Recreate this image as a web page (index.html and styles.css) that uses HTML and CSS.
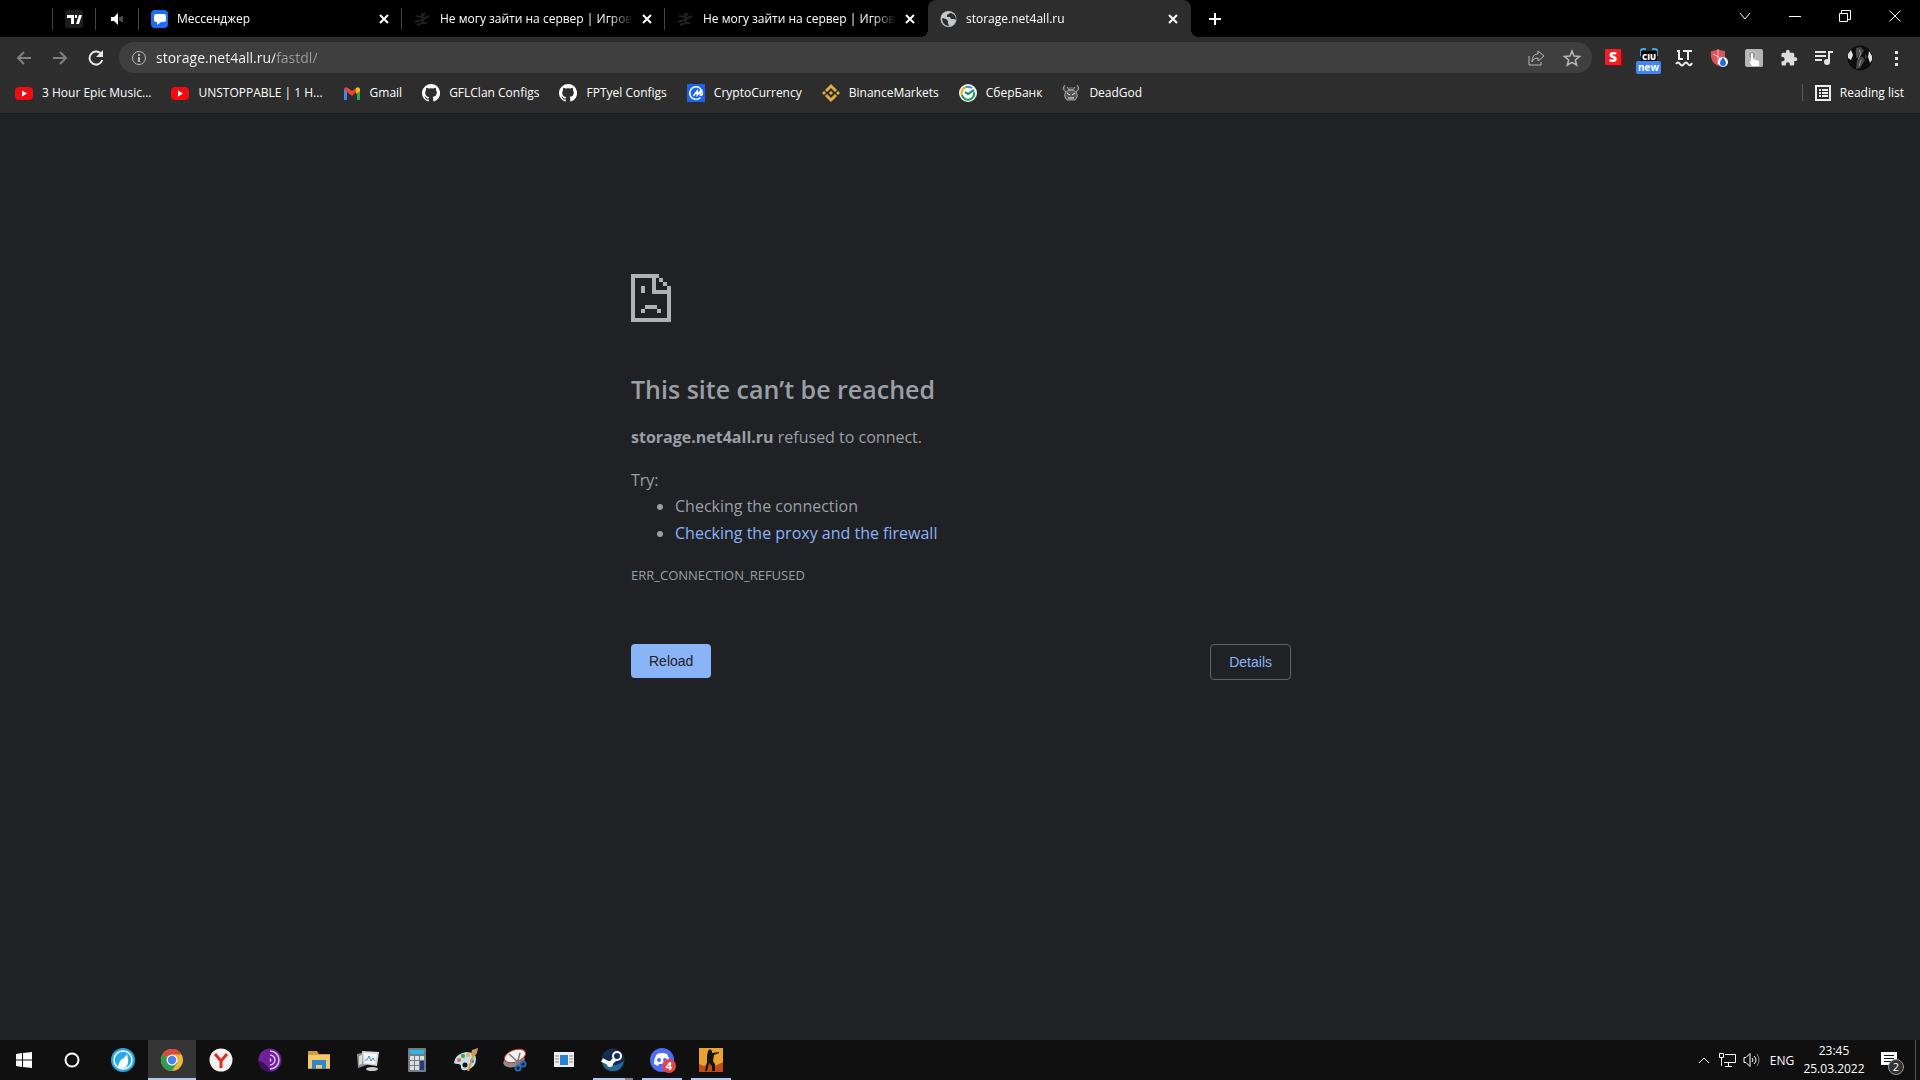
FILE: index.html
```
<!DOCTYPE html>
<html lang="en">
<head>
    <meta charset="UTF-8">
    <meta name="viewport" content="width=device-width, initial-scale=1.0">
    <title>storage.net4all.ru</title>
    <link rel="stylesheet" href="styles.css">
</head>
<body>
    <header class="browser">
        <div class="tabStrip">
            <div class="tab pinned blank"></div>
            <div class="tab pinned">
                <svg width="18" height="18" viewBox="0 0 18 18"><rect width="18" height="18" rx="2" fill="#1c1c1c"/><path d="M2 5h7v9H6V8H2zM10 5h2v3h-2zM14 5h3l-3 9h-3z" fill="#fff"/></svg>
            </div>
            <div class="tab pinned">
                <svg width="14" height="14" viewBox="0 0 14 14"><path d="M1 5h3l4-4v12L4 9H1z" fill="#fff"/><path d="M10 5v4M12 4v6" stroke="#999" fill="none"/></svg>
            </div>
            <div class="tab">
                <svg class="favicon" width="17" height="18" viewBox="0 0 17 18"><rect width="17" height="18" rx="4" fill="#1a6df5"/><path d="M5 4h8q2 0 2 2v4q0 2-2 2h-3l-4 3v-3H5q-2 0-2-2V6q0-2 2-2z" fill="#fff"/></svg>
                <span class="tabTitle">Мессенджер</span>
                <button class="close" aria-label="Close tab"><svg width="10" height="10" viewBox="0 0 10 10"><path d="M1 1l8 8M9 1L1 9"/></svg></button>
            </div>
            <div class="tab">
                <svg class="favicon" width="17" height="18" viewBox="0 0 17 18"><path d="M2 6l6 1 3-4M1 12l6-2 8-4M3 15l5-2 5 0M8 3l1 10" stroke="#202020" stroke-width="2" fill="none"/></svg>
                <span class="tabTitle">Не могу зайти на сервер | Игров</span>
                <button class="close" aria-label="Close tab"><svg width="10" height="10" viewBox="0 0 10 10"><path d="M1 1l8 8M9 1L1 9"/></svg></button>
            </div>
            <div class="tab last">
                <svg class="favicon" width="17" height="18" viewBox="0 0 17 18"><path d="M2 6l6 1 3-4M1 12l6-2 8-4M3 15l5-2 5 0M8 3l1 10" stroke="#202020" stroke-width="2" fill="none"/></svg>
                <span class="tabTitle">Не могу зайти на сервер | Игров</span>
                <button class="close" aria-label="Close tab"><svg width="10" height="10" viewBox="0 0 10 10"><path d="M1 1l8 8M9 1L1 9"/></svg></button>
            </div>
            <div class="tab active">
                <svg class="favicon" width="17" height="18" viewBox="0 0 17 18"><circle cx="8.5" cy="9" r="8" fill="#c4c7ca"/><path d="M2 8l4 1 2 2v2l1 3c-4 0-7-3-7-8zM10 3l-3 2v2h3l1 2h3l2 1c0-4-2-6-5-7z" fill="#2d2d2d"/></svg>
                <span class="tabTitle">storage.net4all.ru</span>
                <button class="close" aria-label="Close tab"><svg width="10" height="10" viewBox="0 0 10 10"><path d="M1 1l8 8M9 1L1 9"/></svg></button>
            </div>
            <button class="newTab" aria-label="New tab"><svg width="14" height="14" viewBox="0 0 14 14"><path d="M7 1v12M1 7h12" stroke="#fff" stroke-width="2"/></svg></button>
            <div class="windowButtons">
                <button aria-label="Search tabs"><svg width="12" height="12" viewBox="0 0 12 12"><path d="M1 3l5 6 5-6"/></svg></button>
                <button aria-label="Minimize"><svg width="12" height="12" viewBox="0 0 12 12"><path d="M0 6.500h12"/></svg></button>
                <button aria-label="Restore"><svg width="12" height="12" viewBox="0 0 12 12"><path d="M.5 3.500h8v8h-8zM2.500 3V.5h9v9H9"/></svg></button>
                <button aria-label="Close"><svg width="12" height="12" viewBox="0 0 12 12"><path d="M.5.5l11 11M11.500.5l-11 11"/></svg></button>
            </div>
        </div>

        <div class="toolbar">
            <button class="navBtn dim" aria-label="Back"><svg width="16" height="16" viewBox="0 0 16 16"><path d="M15 8H2M8 2L2 8l6 6"/></svg></button>
            <button class="navBtn dim" aria-label="Forward"><svg width="16" height="16" viewBox="0 0 16 16"><path d="M1 8h13M8 2l6 6-6 6"/></svg></button>
            <button class="navBtn" aria-label="Reload"><svg width="16" height="16" viewBox="0 0 16 16"><path d="M13.500 4.500A6.500 6.500 0 1 0 14.300 10" stroke-width="2"/><path d="M15 0v7H8z" fill="#e8e8e8" stroke="none"/></svg></button>
            <div class="omnibox">
                <svg width="16" height="16" viewBox="0 0 16 16"><circle cx="8" cy="8" r="6.500" stroke="#bbb" fill="none"/><path d="M8 4v2M8 7v5" stroke="#bbb" stroke-width="2"/></svg>
                <input class="url" type="text" aria-label="Address" value="storage.net4all.ru/fastdl/">
                <button class="boxBtn" aria-label="Share"><svg width="18" height="18" viewBox="0 0 18 18"><path d="M2 7v9h12v-3M11 2l6 5-6 5V9c-3 0-5 1-6 4 0-5 2-8 6-8z"/></svg></button>
                <button class="boxBtn" aria-label="Bookmark"><svg width="18" height="18" viewBox="0 0 18 18"><path d="M9 2l2 5 5.500.4-4.200 3.500 1.400 5.300L9 13.400l-4.700 2.800 1.400-5.300L1.500 7.400 7 7z" stroke-width="1.500"/></svg></button>
            </div>
            <div class="extensions">
                <button aria-label="Extension S"><svg width="20" height="20" viewBox="0 0 20 20"><path d="M16 2l3 2v14H4l-3-3z" fill="#8e0b10"/><rect x="1" y="1" width="16" height="16" rx="1" fill="#ef1d24"/><text x="9" y="14" text-anchor="middle" class="glyph">S</text></svg></button>
                <button class="badged" aria-label="Extension CIU"><svg width="20" height="20" viewBox="0 0 20 20"><path d="M2 8V3q0-2 2-2h3M13 1h3q2 0 2 2v5" stroke="#35a7e8" stroke-width="2" fill="none"/><rect x="2" y="3" width="16" height="10" fill="#050505"/><text x="10" y="12" text-anchor="middle" class="glyph tiny">CIU</text></svg><span class="badge">new</span></button>
                <button aria-label="LanguageTool"><svg width="18" height="18" viewBox="0 0 18 18"><path d="M2 2h2v8h4M8 2h9M13 2v9M1 15q2-3 4 0t4 0 4 0 4-1" stroke="#eee" stroke-width="2" fill="none"/></svg></button>
                <button aria-label="Shield"><svg width="18" height="18" viewBox="0 0 18 18"><path d="M8 0q3 2 7 2v6q-1 6-7 9Q2 14 1 8V2q4 0 7-2z" fill="#d9545b"/><path d="M8 1v14M3 5l9 5" stroke="#f2b9bb"/><circle cx="13" cy="13" r="5" fill="#fff"/><path d="M13 8q3 4 3 6a3 3 0 0 1-6 0q0-2 3-6z" fill="#246de0"/></svg></button>
                <button aria-label="Click"><svg width="18" height="18" viewBox="0 0 18 18"><rect width="18" height="18" rx="2" fill="#b4b4b4"/><circle cx="7" cy="6" r="4" fill="#999" stroke="#ccc"/><path d="M6 5q1-2 2 0v5l6 2v5H7l-3-5 2 1z" fill="#fff"/></svg></button>
                <button aria-label="Extensions"><svg width="18" height="18" viewBox="0 0 24 24"><path d="M20.500 11H19V7a2 2 0 0 0-2-2h-4V3.500a2.500 2.500 0 0 0-5 0V5H4a2 2 0 0 0-2 2v3.800h1.500a2.700 2.700 0 0 1 0 5.400H2V20a2 2 0 0 0 2 2h3.800v-1.500a2.700 2.700 0 0 1 5.400 0V22H17a2 2 0 0 0 2-2v-4h1.500a2.500 2.500 0 0 0 0-5z" fill="#ddd"/></svg></button>
                <button aria-label="Media"><svg width="20" height="18" viewBox="0 0 20 18"><path d="M1 3h11M1 7h11M1 11h7M15 13V3h4" stroke="#e4e4e4" stroke-width="2" fill="none"/><circle cx="13" cy="13" r="2" fill="#e4e4e4" stroke="#e4e4e4" stroke-width="2"/></svg></button>
                <button class="profile" aria-label="Profile"><svg width="26" height="26" viewBox="0 0 26 26"><circle cx="13" cy="13" r="12.500" fill="#0d0d0d"/><path d="M1 9l3-4 2 5-2 5-3-2zM22 6l3 5v4l-2 3-2-6z" fill="#ddd"/><path d="M9 3l5-1 3 4-4 5-4 2zM10 15l5-4 3 4-5 8-4 1zM18 9l2 3-2 2z" fill="#484848"/><path d="M12 5l2 4-3 5M14 15l-2 6" stroke="#999" fill="none"/></svg></button>
                <button aria-label="Menu"><svg width="6" height="18" viewBox="0 0 6 18"><path d="M1 2h3v3H1zM1 8h3v3H1zM1 14h3v3H1z" fill="#e4e4e4"/></svg></button>
            </div>
        </div>

        <nav class="bookmarks">
            <a href="#"><svg width="18" height="18" viewBox="0 0 18 18"><rect y="3" width="18" height="13" rx="4" fill="#f00d12"/><path d="M7 6.500v6l5-3z" fill="#fff"/></svg>3 Hour Epic Music...</a>
            <a href="#"><svg width="18" height="18" viewBox="0 0 18 18"><rect y="3" width="18" height="13" rx="4" fill="#f00d12"/><path d="M7 6.500v6l5-3z" fill="#fff"/></svg>UNSTOPPABLE | 1 H...</a>
            <a href="#"><svg width="18" height="18" viewBox="0 0 18 18"><path d="M1 5l3 2v9H1z" fill="#4285f4"/><path d="M14 7l3-2v11h-3z" fill="#34a853"/><path d="M1 5q1-3 4-1l4 3 4-3v4l-4 4-5-4z" fill="#ea4335"/><path d="M13 4q3-2 4 1v2l-4 3z" fill="#fbbc04"/></svg>Gmail</a>
            <a href="#"><svg width="18" height="18" viewBox="0 0 16 16"><path d="M8 0a8 8 0 0 0-2.500 15.600c.4.1.5-.2.5-.4v-1.500c-2.200.5-2.700-.9-2.700-.9-.4-.9-.9-1.200-.9-1.200-.7-.5.1-.5.1-.5.8.1 1.200.8 1.200.8.7 1.200 1.900.9 2.300.7.1-.5.3-.9.5-1.100-1.800-.2-3.600-.9-3.600-4 0-.9.300-1.600.8-2.100-.1-.2-.4-1 .1-2.100 0 0 .7-.2 2.200.8a7.600 7.600 0 0 1 4 0c1.500-1 2.200-.8 2.200-.8.4 1.100.2 1.900.1 2.100.5.6.8 1.300.8 2.100 0 3.100-1.900 3.700-3.700 3.900.3.300.6.800.6 1.500v2.300c0 .2.100.5.600.4A8 8 0 0 0 8 0z" fill="#fff"/></svg>GFLClan Configs</a>
            <a href="#"><svg width="18" height="18" viewBox="0 0 16 16"><path d="M8 0a8 8 0 0 0-2.500 15.600c.4.1.5-.2.5-.4v-1.500c-2.200.5-2.700-.9-2.700-.9-.4-.9-.9-1.200-.9-1.200-.7-.5.1-.5.1-.5.8.1 1.200.8 1.200.8.7 1.200 1.900.9 2.300.7.1-.5.3-.9.5-1.100-1.800-.2-3.600-.9-3.600-4 0-.9.300-1.600.8-2.100-.1-.2-.4-1 .1-2.100 0 0 .7-.2 2.200.8a7.600 7.600 0 0 1 4 0c1.500-1 2.200-.8 2.200-.8.4 1.100.2 1.900.1 2.100.5.6.8 1.300.8 2.100 0 3.100-1.900 3.700-3.700 3.900.3.300.6.800.6 1.500v2.300c0 .2.100.5.600.4A8 8 0 0 0 8 0z" fill="#fff"/></svg>FPTyel Configs</a>
            <a href="#"><svg width="18" height="18" viewBox="0 0 18 18"><rect width="18" height="18" rx="1" fill="#1b62f0"/><path d="M13.500 13.500A6.300 6.300 0 1 1 15.300 9q0 3-2 2V7l-3 4V7l-4 5" stroke="#fff" stroke-width="1.500" fill="none"/></svg>CryptoCurrency</a>
            <a href="#"><svg width="18" height="18" viewBox="0 0 18 18"><path d="M9 0l6 6-2 2-4-4-4 4-2-2zM9 18l6-6-2-2-4 4-4-4-2 2zM2 7l2 2-2 2-2-2zM16 7l2 2-2 2-2-2zM9 7l2 2-2 2-2-2z" fill="#e3ad3c"/></svg>BinanceMarkets</a>
            <a href="#"><svg width="18" height="18" viewBox="0 0 18 18"><circle cx="9" cy="9" r="9" fill="#f5f8f5"/><path d="M3 11A6 6 0 0 1 7 3" stroke="#e5ad2a" stroke-width="2" fill="none"/><path d="M7 3q3-1 6 1" stroke="#2e8fd8" stroke-width="2" fill="none"/><path d="M3 11a6 6 0 0 0 12-3" stroke="#1d9b69" stroke-width="2" fill="none"/><path d="M6 8l3 2 6-4" stroke="#1b7f6b" stroke-width="2" fill="none"/></svg>СберБанк</a>
            <a href="#"><svg width="18" height="18" viewBox="0 0 18 18"><path d="M3 1q-4 4 1 7M15 1q4 4-1 7M5 3l2 3h4l2-3M4 8q-3 4 1 8h8q4-4 1-8l-3-2H7z" fill="#555" stroke="#aaa"/><path d="M5 9l3 2M13 9l-3 2M6 14h6" stroke="#eee"/></svg>DeadGod</a>
            <button class="readingList"><svg width="16" height="16" viewBox="0 0 16 16"><rect x="1" y="1" width="14" height="14" fill="none" stroke="#eee" stroke-width="2"/><path d="M4 5h2M7 5h6M4 8h2M7 8h6M4 11h2M7 11h6" stroke="#eee" stroke-width="2"/></svg>Reading list</button>
        </nav>
    </header>

    <main class="page">
        <div class="errorBox">
            <svg class="sadFile" width="40" height="48" viewBox="0 0 40 48" shape-rendering="crispEdges"><path d="M0 0h28v4h4v4h4v4h4v36H0zM4 4v40h32V20H21V4zM25 4v12h11v-4h-4V8h-4V4z" fill="#b0b3b6" fill-rule="evenodd"/><path d="M10 12h4v7h-4zM14 31h12v4H14zM10 35h4v4h-4zM26 35h4v4h-4z" fill="#b0b3b6"/></svg>
            <h1>This site can’t be reached</h1>
            <p><strong>storage.net4all.ru</strong> refused to connect.</p>
            <p class="try">Try:</p>
            <ul>
                <li>Checking the connection</li>
                <li><a href="#">Checking the proxy and the firewall</a></li>
            </ul>
            <p class="errorCode">ERR_CONNECTION_REFUSED</p>
            <div class="buttons">
                <button class="reload">Reload</button>
                <button class="details">Details</button>
            </div>
        </div>
    </main>

    <footer class="taskbar">
        <button class="task start" aria-label="Start"><svg width="16" height="16" viewBox="0 0 16 16"><path d="M0 2l6-1v6.500H0zM7 1l9-1v7.500H7zM0 8.500h6V15l-6-1zM7 8.500h9V16l-9-1z" fill="#fff"/></svg></button>
        <button class="task start" aria-label="Search"><svg width="16" height="16" viewBox="0 0 16 16"><circle cx="8" cy="8" r="6.500" stroke="#fff" stroke-width="2" fill="none"/></svg></button>
        <div class="apps">
            <button class="task" aria-label="LibreWolf"><svg width="24" height="24" viewBox="0 0 24 24"><circle cx="12" cy="12" r="12" fill="#27a8ea"/><circle cx="12" cy="12" r="9" fill="none" stroke="#fff" stroke-width="1.500"/><path d="M7 19q1-7 6-9l3-4 1 5q1 4-2 8-4 2-8 0z" fill="#fff"/></svg></button>
            <button class="task current" aria-label="Chrome"><svg width="24" height="24" viewBox="0 0 24 24"><circle cx="12" cy="12" r="11" fill="#e8b93c"/><path d="M12 12L2.500 6.500A11 11 0 0 1 21.500 6.500H12z" fill="#e2473b"/><path d="M12 12L2.500 6.500A11 11 0 0 0 12 23l5-8z" fill="#2f9c55"/><circle cx="12" cy="12" r="5.500" fill="#f3f3f3"/><circle cx="12" cy="12" r="4.200" fill="#4a84ee"/></svg></button>
            <button class="task" aria-label="Yandex"><svg width="24" height="24" viewBox="0 0 24 24"><circle cx="12" cy="12" r="11.500" fill="#f2f2f2"/><path d="M6 6l6 7 6-7M12 12v8" stroke="#e22b25" stroke-width="3" fill="none"/></svg></button>
            <button class="task" aria-label="Tor"><svg width="24" height="24" viewBox="0 0 24 24"><circle cx="12" cy="12" r="11.500" fill="#6f1f9b"/><path d="M0 13q6-1 12 10Q2 24 0 13z" fill="#3c0f5d"/><path d="M12 3a9 9 0 0 1 0 18M12 7a5 5 0 0 1 0 10M12 10.500a2 2 0 0 1 0 3" stroke="#d9c6ea" stroke-width="1.500" fill="none"/></svg></button>
            <button class="task" aria-label="Explorer"><svg width="24" height="24" viewBox="0 0 24 24"><path d="M1 3h9l2 3h11v15H1z" fill="#d39b3a"/><path d="M1 7h22v13H1z" fill="#f3c96c"/><path d="M5 12h14v9h-4v-4H9v4H5z" fill="#2c87d2"/></svg></button>
            <button class="task" aria-label="Monitor"><svg width="24" height="24" viewBox="0 0 24 24"><path d="M1 6l10-2v13l-9 3z" fill="#8d8f92"/><path d="M3 8l3-1v9l-3 1z" fill="#ddd"/><path d="M6 3l17 1-2 14-14-2z" fill="#d6d9dc"/><path d="M8 5l13 1-2 10-10-1z" fill="#f5f9ff"/><path d="M9 12h2l2-4 2 5 2-3 2 3" stroke="#4388d0" fill="none"/><ellipse cx="16" cy="21" rx="6" ry="2" fill="#c9cbcd"/></svg></button>
            <button class="task" aria-label="Calculator"><svg width="24" height="24" viewBox="0 0 24 24"><rect x="3" width="18" height="24" rx="1" fill="#777c80"/><path d="M5 2h14v4H5z" fill="#2bb7ed"/><path d="M5 8h4v4H5zM10 8h4v4h-4zM15 8h4v4h-4zM5 13h4v4H5zM10 13h4v4h-4zM5 18h4v4H5zM10 18h4v4h-4z" fill="#dcdfe1"/><path d="M15 13h4v9h-4z" fill="#1f3c84"/></svg></button>
            <button class="task" aria-label="Paint"><svg width="24" height="24" viewBox="0 0 24 24"><path d="M0 15Q1 6 12 4q10 0 10 7 0 9-10 11-5 1-5-3 0-3-3-3t-4-1z" fill="#c5dcee"/><circle cx="5" cy="12" r="2" fill="#de6b35"/><circle cx="9" cy="8" r="2" fill="#499b4a"/><circle cx="14" cy="7" r="2" fill="#e4b52e"/><circle cx="11" cy="17" r="2.500" fill="#111"/><circle cx="18" cy="13" r="2" fill="#296cc5"/><path d="M13 23l5-15 2 1-5 14z" fill="#e19a2c"/><path d="M17 7l1-5 6-2-1 5-3 4z" fill="#c99a63"/></svg></button>
            <button class="task" aria-label="Snipping tool"><svg width="24" height="24" viewBox="0 0 24 24"><ellipse cx="11" cy="13" rx="11" ry="6" transform="rotate(-15 11 13)" fill="#8d8d8f"/><ellipse cx="12" cy="8" rx="11" ry="6" transform="rotate(-20 12 8)" fill="#f0f0f0" stroke="#c93831"/><path d="M6 6l11 10M17 5l-3 11" stroke="#777" stroke-width="1.500"/><circle cx="15" cy="20" r="2.500" fill="none" stroke="#246cae" stroke-width="2"/><circle cx="20" cy="16" r="2.500" fill="none" stroke="#246cae" stroke-width="2"/></svg></button>
            <button class="task" aria-label="Window"><svg width="24" height="24" viewBox="0 0 24 24"><path d="M2 4h20v15H2z" fill="#eee"/><path d="M8 7h8v10H8z" fill="#2382d5"/><path d="M3 8h4M3 11h4M3 14h4M17 8h4M17 11h4M17 14h4" stroke="#888"/></svg></button>
            <button class="task open stacked" aria-label="Steam"><svg width="24" height="24" viewBox="0 0 24 24"><circle cx="12" cy="12" r="11.500" fill="#142d55"/><path d="M1 15q11 6 22-2-2 10-11 10-8 0-11-8z" fill="#246b9b"/><path d="M1 12l8 4 7-7" stroke="#fff" stroke-width="4" fill="none"/><circle cx="16" cy="8" r="4" fill="#142d55" stroke="#fff" stroke-width="2"/><circle cx="9" cy="16" r="3" fill="#fff"/></svg></button>
            <button class="task open" aria-label="Discord"><svg width="26" height="26" viewBox="0 0 26 26"><circle cx="13" cy="13" r="12" fill="#4e6df0"/><path d="M8 7q5-2 10 0 3 5 3 10l-4 2-1-2h-6l-1 2-4-2q0-6 3-10z" fill="#fff"/><circle cx="10" cy="13" r="2" fill="#4e6df0"/><circle cx="16" cy="13" r="2" fill="#4e6df0"/></svg><span class="count">4</span></button>
            <button class="task open" aria-label="Counter-Strike"><svg width="24" height="24" viewBox="0 0 24 24"><path d="M0 0h24v24H0z" fill="#e9a52e"/><path d="M0 16l5 2 5-3 6 3 8-4v10H0z" fill="#bd4c1e"/><path d="M9 3l2-2 2 2v2l7-1v1l-5 2-1 6 2 3 0 7h-3l0-5-3-3-2 8H6l2-9V8z" fill="#171410"/></svg></button>
        </div>
        <div class="tray">
            <button aria-label="Hidden icons"><svg width="14" height="14" viewBox="0 0 14 14"><path d="M2 10l5-5 5 5"/></svg></button>
            <button aria-label="Network"><svg width="18" height="16" viewBox="0 0 18 16"><path d="M6 2.500h10.500v8H5M.5 1.500h4v4h-4zM2.500 6v8M9.500 11v3M6 14.500h7"/></svg></button>
            <button aria-label="Volume"><svg width="18" height="16" viewBox="0 0 18 16"><path d="M1 5.500h2l4-4v13l-4-4H1zM9 6q2 2 0 4M11 4q4 4 0 8"/><path d="M14 2q4 6 0 12" opacity=".5"/></svg></button>
            <button class="lang">ENG</button>
            <div class="clock"><span>23:45</span><span>25.03.2022</span></div>
            <button class="notes" aria-label="Notifications"><svg width="18" height="18" viewBox="0 0 18 18"><path d="M1 1h16v13h-4v4l-4-4H1z" fill="#fff" stroke="none"/><path d="M4 4.500h10M4 7.500h10M4 10.500h7" stroke="#111"/></svg><span class="noteCount">2</span></button>
        </div>
    </footer>
</body>
</html>
```
FILE: styles.css
```
* {
    box-sizing: border-box;
}

body {
    margin: 0;
    min-height: 100vh;
    display: flex;
    flex-direction: column;
    background-color: #202124;
    color: #fff;
    font-family: "Segoe UI", "Open Sans", "Noto Sans", sans-serif;
    font-size: 12px;
}

button {
    display: flex;
    align-items: center;
    justify-content: center;
    padding: 0;
    border: none;
    background: none;
    color: inherit;
    font: inherit;
    cursor: pointer;
}

svg {
    display: block;
    flex-shrink: 0;
}

.browser {
    background-color: #2d2d2d;
    border-bottom: 1px solid #1c1c1d;
}

/* tabs */
.tabStrip {
    display: flex;
    height: 37px;
    background-color: #000;
}

.tab {
    position: relative;
    display: flex;
    align-items: center;
    flex: 0 1 263px;
    min-width: 0;
    padding: 0 13px 0 12px;
    gap: 9px;
}

.tab::after {
    content: "";
    position: absolute;
    right: 0;
    top: 8px;
    width: 1px;
    height: 22px;
    background-color: #444;
}

.tab.pinned {
    flex: 0 0 43px;
    justify-content: center;
    padding: 0 2px 0 0;
}

.tab.blank {
    flex-basis: 53px;
}

.tab.last::after {
    display: none;
}

.tab.active {
    background-color: #2d2d2d;
    border-radius: 8px 8px 0 0;
}

.tab.active::before,
.tab.active::after {
    content: "";
    position: absolute;
    top: auto;
    bottom: 0;
    width: 8px;
    height: 8px;
}

.tab.active::before {
    left: -8px;
    background: radial-gradient(circle at 0 0, #000 8px, #2d2d2d 8px);
}

.tab.active::after {
    right: -8px;
    background: radial-gradient(circle at 100% 0, #000 8px, #2d2d2d 8px);
}

.tabTitle {
    flex: 1;
    overflow: hidden;
    white-space: nowrap;
    mask-image: linear-gradient(to left, transparent, #000 24px);
}

.close svg {
    stroke: #fff;
    stroke-width: 2;
}

.newTab {
    width: 48px;
}

.windowButtons {
    display: flex;
    height: 32px;
    margin-left: auto;
}

.windowButtons button {
    width: 50px;
}

.windowButtons svg {
    fill: none;
    stroke: #fff;
}

/* address bar */
.toolbar {
    display: flex;
    align-items: center;
    padding: 5px 6px 4px;
}

.navBtn {
    width: 36px;
    height: 28px;
}

.navBtn svg {
    fill: none;
    stroke: #e8e8e8;
    stroke-width: 2;
}

.navBtn.dim svg {
    stroke: #808080;
}

.omnibox {
    flex: 1;
    display: flex;
    align-items: center;
    height: 31px;
    margin-left: 5px;
    padding: 0 11px 0 12px;
    border-radius: 16px;
    background-color: #3f3f3f;
}

.url {
    flex: 1;
    min-width: 0;
    height: 28px;
    margin-left: 9px;
    padding: 0;
    border: none;
    outline: none;
    font: inherit;
    font-size: 14px;
    color: transparent;
    caret-color: #fff;
    /* host is white, the path after it is grey */
    background: linear-gradient(to right, #fff 119px, #9e9e9e 119px);
    background-clip: text;
}

.boxBtn {
    width: 18px;
    margin-left: 18px;
}

.boxBtn svg {
    fill: none;
    stroke: #b8b8b8;
}

.extensions {
    display: flex;
    align-items: center;
    margin-left: 4px;
}

.extensions button {
    width: 35px;
    height: 28px;
}

.extensions .profile {
    width: 38px;
}

.glyph {
    fill: #fff;
    font-size: 14px;
    font-weight: 800;
}

.glyph.tiny {
    font-size: 8px;
}

.badged {
    position: relative;
}

.badge {
    position: absolute;
    left: 5px;
    bottom: -2px;
    width: 25px;
    border-radius: 2px;
    background-color: #4285f4;
    font-size: 10px;
    font-weight: 700;
    line-height: 13px;
}

/* bookmarks */
.bookmarks {
    display: flex;
    align-items: center;
    gap: 20px;
    height: 36px;
    padding: 0 16px 5px 15px;
}

.bookmarks a {
    display: flex;
    align-items: center;
    gap: 9px;
    color: #fff;
    text-decoration: none;
    white-space: nowrap;
}

.readingList {
    gap: 9px;
    margin-left: auto;
    padding-left: 12px;
    border-left: 1px solid #5a5a5a;
    white-space: nowrap;
}

/* error page */
.page {
    flex: 1;
    padding: 160px 24px 40px 26px;
    color: #9aa0a6;
    font-size: 16px;
    line-height: 26px;
}

.errorBox {
    max-width: 660px;
    margin: 0 auto;
}

h1 {
    margin: 49px 0 17px;
    font-size: 25px;
    font-weight: 600;
    line-height: 36px;
}

p {
    margin: 0;
}

.try {
    margin-top: 17px;
}

ul {
    margin: 0;
    padding-left: 44px;
}

li {
    line-height: 27px;
}

.errorBox a {
    color: #8ab4f8;
    text-decoration: none;
}

.errorCode {
    margin-top: 15px;
    font-size: 13px;
}

.buttons {
    display: flex;
    justify-content: space-between;
    align-items: flex-start;
    margin-top: 56px;
}

.reload,
.details {
    height: 34px;
    padding: 0 18px;
    border-radius: 4px;
    font-family: "Liberation Sans", Arial, sans-serif;
    font-size: 14px;
}

.reload {
    background-color: #8ab4f8;
    color: #202124;
}

.details {
    height: 36px;
    border: 1px solid #5f6368;
    color: #8ab4f8;
}

/* taskbar */
.taskbar {
    display: flex;
    height: 40px;
    background-color: #101010;
}

.task {
    position: relative;
    width: 48px;
    height: 40px;
}

.apps {
    display: flex;
    gap: 1px;
    margin-left: 3px;
}

.task.current {
    background-color: #353535;
}

.task.current::after,
.task.open::after {
    content: "";
    position: absolute;
    left: 4px;
    right: 4px;
    bottom: 0;
    height: 2px;
    background-color: #b4c7f0;
}

.task.current::after {
    left: 0;
    right: 0;
}

.task.stacked::after {
    background: linear-gradient(to left, #808692 8px, #b4c7f0 8px);
}

.count {
    position: absolute;
    left: 24px;
    top: 19px;
    width: 14px;
    height: 14px;
    border-radius: 50%;
    background-color: #e0474c;
    font-size: 11px;
    font-weight: 700;
    line-height: 14px;
}

.tray {
    display: flex;
    align-items: center;
    margin-left: auto;
    padding-right: 4px;
}

.tray button {
    width: 24px;
    height: 40px;
}

.tray svg {
    fill: none;
    stroke: #fff;
}

.tray .lang {
    width: 36px;
}

.clock {
    display: flex;
    flex-direction: column;
    align-items: center;
    width: 68px;
    line-height: 18px;
}

.tray .notes {
    position: relative;
    width: 48px;
    padding-right: 6px;
    border-right: 1px solid #555;
}

.noteCount {
    position: absolute;
    left: 20px;
    top: 19px;
    width: 16px;
    height: 16px;
    border: 1px solid #999;
    border-radius: 50%;
    background-color: #333;
    font-size: 11px;
    line-height: 14px;
}
```
